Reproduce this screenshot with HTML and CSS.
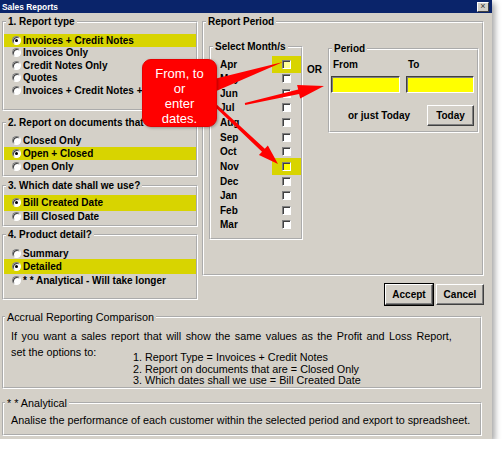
FILE: index.html
```html
<!DOCTYPE html>
<html>
<head>
<meta charset="utf-8">
<title>Sales Reports</title>
<link rel="stylesheet" href="styles.css">
</head>
<body>
<div class="window">
  <div class="titlebar">
    <span class="title">Sales Reports</span>
    <span class="close">×</span>
  </div>
  <div class="content">
    <div class="top">
      <div class="left">
        <fieldset class="group g1">
          <legend>1. Report type</legend>
          <div class="rows r1">
            <div class="opt hl"><span class="radio on"></span>Invoices + Credit Notes</div>
            <div class="opt"><span class="radio"></span>Invoices Only</div>
            <div class="opt"><span class="radio"></span>Credit Notes Only</div>
            <div class="opt"><span class="radio"></span>Quotes</div>
            <div class="opt"><span class="radio"></span>Invoices + Credit Notes + Quotes</div>
          </div>
        </fieldset>
        <fieldset class="group g2">
          <legend>2. Report on documents that are</legend>
          <div class="rows r2">
            <div class="opt"><span class="radio"></span>Closed Only</div>
            <div class="opt hl"><span class="radio on"></span>Open + Closed</div>
            <div class="opt"><span class="radio"></span>Open Only</div>
          </div>
        </fieldset>
        <fieldset class="group g3">
          <legend>3. Which date shall we use?</legend>
          <div class="rows r3">
            <div class="opt hl"><span class="radio on"></span>Bill Created Date</div>
            <div class="opt"><span class="radio"></span>Bill Closed Date</div>
          </div>
        </fieldset>
        <fieldset class="group g4">
          <legend>4. Product detail?</legend>
          <div class="rows r4">
            <div class="opt"><span class="radio"></span>Summary</div>
            <div class="opt hl"><span class="radio on"></span>Detailed</div>
            <div class="opt"><span class="radio"></span>* * Analytical - Will take longer</div>
          </div>
        </fieldset>
      </div>
      <div class="right">
        <fieldset class="group period-group">
          <legend>Report Period</legend>
          <div class="period-inner">
            <fieldset class="group months">
              <legend>Select Month/s</legend>
              <div class="month-rows">
                <div class="month"><span class="mname">Apr</span><span class="cbcell hlcell"><span class="checkbox yel"></span></span></div>
                <div class="month"><span class="mname">May</span><span class="cbcell"><span class="checkbox"></span></span></div>
                <div class="month"><span class="mname">Jun</span><span class="cbcell"><span class="checkbox"></span></span></div>
                <div class="month"><span class="mname">Jul</span><span class="cbcell"><span class="checkbox"></span></span></div>
                <div class="month"><span class="mname">Aug</span><span class="cbcell"><span class="checkbox"></span></span></div>
                <div class="month"><span class="mname">Sep</span><span class="cbcell"><span class="checkbox"></span></span></div>
                <div class="month"><span class="mname">Oct</span><span class="cbcell"><span class="checkbox"></span></span></div>
                <div class="month"><span class="mname">Nov</span><span class="cbcell hlcell"><span class="checkbox yel2"></span></span></div>
                <div class="month"><span class="mname">Dec</span><span class="cbcell"><span class="checkbox"></span></span></div>
                <div class="month"><span class="mname">Jan</span><span class="cbcell"><span class="checkbox"></span></span></div>
                <div class="month"><span class="mname">Feb</span><span class="cbcell"><span class="checkbox"></span></span></div>
                <div class="month"><span class="mname">Mar</span><span class="cbcell"><span class="checkbox"></span></span></div>
              </div>
            </fieldset>
            <div class="or">OR</div>
            <fieldset class="group period">
              <legend>Period</legend>
              <div class="period-body">
                <div class="dates">
                  <div class="datecol"><span class="dlabel">From</span><span class="input"></span></div>
                  <div class="datecol"><span class="dlabel">To</span><span class="input"></span></div>
                </div>
                <div class="today-row">
                  <span>or just Today</span>
                  <span class="btn today">Today</span>
                </div>
              </div>
            </fieldset>
          </div>
        </fieldset>
        <div class="buttons">
          <span class="default"><span class="btn">Accept</span></span>
          <span class="btn cancel">Cancel</span>
        </div>
      </div>
    </div>
    <fieldset class="group accrual">
      <legend>Accrual Reporting Comparison</legend>
      <div class="accrual-body">
        <div class="line1">If you want a sales report that will show the same values as the Profit and Loss Report,</div>
        <div class="setrow">
          <div class="setlabel">set the options to:</div>
          <div class="setlist">
            <div>1. Report Type = Invoices + Credit Notes</div>
            <div>2. Report on documents that are = Closed Only</div>
            <div>3. Which dates shall we use = Bill Created Date</div>
          </div>
        </div>
      </div>
    </fieldset>
    <fieldset class="group analytical">
      <legend>* * Analytical</legend>
      <div class="analytical-body">Analise the performance of each customer within the selected period and export to spreadsheet.</div>
    </fieldset>
  </div>

  <svg class="arrows" width="492" height="439" viewBox="0 0 492 439">
    <polygon points="214,79 283,62 214,92" fill="#ff0000"/>
    <polygon points="244.8,103 298.2,89.6 297.1,84.95 324,86 300.2,98.6 299.1,93.9 245.2,105" fill="#ff0000"/>
    <polygon points="215,102.9 264.8,148.8 267.85,145.55 278,164 258.95,155.05 262,151.8 213,105.1" fill="#ff0000"/>
  </svg>
  <div class="callout">From, to<br>or<br>enter<br>dates.</div>
</div>
</body>
</html>
```

FILE: styles.css
```css
* { box-sizing: border-box; }

body {
  margin: 0;
  background: #ffffff;
  font-family: "Liberation Sans", Arial, sans-serif;
  font-size: 10px;
  font-weight: bold;
  color: #000;
}

.window {
  position: relative;
  width: 492px;
  height: 439px;
  background: #d4d0c8;
  box-shadow: 3px 3px 6px rgba(0, 0, 0, 0.35);
}

.titlebar {
  height: 13px;
  background: #0a246a;
  display: flex;
  align-items: center;
  justify-content: space-between;
  padding: 0 3px 0 2px;
}

.title {
  color: #fff;
  font-size: 8.4px;
  font-weight: bold;
}

.close {
  width: 12px;
  height: 10px;
  background: #d4d0c8;
  border: 1px solid;
  border-color: #fff #404040 #404040 #fff;
  font-size: 9px;
  line-height: 7px;
  text-align: center;
  color: #333;
  font-weight: normal;
}

.content {
  padding: 3px 0 0 2px;
}

.top {
  display: flex;
  align-items: flex-start;
}

.left {
  width: 196px;
  display: flex;
  flex-direction: column;
}

.right {
  width: 282px;
  margin-left: 4px;
  display: flex;
  flex-direction: column;
}

.group {
  margin: 0;
  padding: 0;
  border: 2px groove #ffffff;
  min-width: 0;
}

.group > legend {
  padding: 0 2px;
  margin-left: 2px;
  line-height: 12px;
}

.g1 { height: 95px; }
.g2 { height: 60px; margin-top: 6px; }
.g3 { height: 47px; margin-top: 3px; }
.g4 { height: 71px; margin-top: 2px; }

.rows { padding-left: 0; }
.r1 { padding-top: 6px; }
.r2 { padding-top: 4.5px; }
.r3 { padding-top: 4px; }
.r4 { padding-top: 5.25px; }

.opt {
  display: flex;
  align-items: center;
  padding-left: 8px;
  white-space: nowrap;
  overflow: hidden;
  height: 13px;
}
.r1 .opt { height: 12.5px; }
.r3 .opt, .r4 .opt { height: 13.5px; }

.opt.hl { background: #d8d400; }
.r3 .opt.hl, .r4 .opt.hl { height: 15.5px; margin: -1px 0; }

.radio {
  position: relative;
  flex: none;
  width: 9px;
  height: 9px;
  margin-right: 2px;
  border-radius: 50%;
  background: #fff;
  border: 1px solid;
  border-color: #808080 #fff #fff #808080;
  box-shadow: inset 1px 1px 0 #404040;
}
.radio.on::after {
  content: "";
  position: absolute;
  left: 2px;
  top: 2px;
  width: 3px;
  height: 3px;
  border-radius: 50%;
  background: #000;
}

/* Report period */
.period-group { height: 260px; }

.period-inner {
  display: flex;
  align-items: flex-start;
  padding: 13px 0 0 5px;
}

.months {
  width: 94px;
  height: 199px;
}

.month-rows { padding-top: 3.7px; }

.month {
  display: flex;
  align-items: center;
  height: 14.64px;
  padding-left: 9px;
}

.mname { flex: 1; }

.cbcell {
  width: 29px;
  height: 17px;
  flex: none;
  display: flex;
  align-items: center;
  justify-content: center;
  margin: -1.2px 0;
}
.hlcell { background: #d8d400; }

.checkbox {
  width: 9px;
  height: 9px;
  background: #fff;
  border: 1px solid;
  border-color: #808080 #fff #fff #808080;
  box-shadow: inset 1px 1px 0 #404040;
}
.checkbox.yel { background: #ffff99; }
.checkbox.yel2 { background: #ffff00; }

.or {
  width: 25px;
  margin-top: 23px;
  padding-left: 4px;
  line-height: 12px;
}

.period {
  width: 151px;
  height: 90px;
  margin-top: 2px;
}

.period-body { padding: 4px 3px 0 1px; }

.dates {
  display: flex;
  gap: 6px;
}

.datecol {
  display: flex;
  flex-direction: column;
}
.datecol:first-child { width: 70px; }
.datecol:last-child { width: 69px; }

.dlabel {
  line-height: 12px;
  padding-left: 2px;
}

.input {
  margin-top: 5px;
  height: 17px;
  background: #ffff00;
  border: 1px solid;
  border-color: #404040 #fff #fff #404040;
  box-shadow: inset 1px 1px 0 #808080;
}

.today-row {
  display: flex;
  align-items: center;
  margin-top: 12px;
  padding-left: 17px;
}

.btn {
  display: flex;
  align-items: center;
  justify-content: center;
  width: 48px;
  height: 21px;
  background: #d4d0c8;
  border: 1px solid;
  border-color: #fff #404040 #404040 #fff;
  box-shadow: inset -1px -1px 0 #808080;
}

.today {
  width: 47px;
  margin-left: auto;
}

.buttons {
  display: flex;
  align-items: center;
  justify-content: flex-end;
  margin-top: 7px;
}

.default {
  display: block;
  border: 1px solid #000;
}

.cancel { margin-left: 2px; }

/* bottom */
.accrual {
  width: 480px;
  height: 78px;
  margin-top: 5px;
  font-weight: normal;
  font-size: 10.8px;
}

.accrual > legend, .analytical > legend { margin-left: 1px; }

.accrual-body {
  padding: 6.5px 0 0 7px;
}

.line1 { line-height: 13px; white-space: nowrap; word-spacing: 1.5px; }

.setrow {
  display: flex;
  margin-top: 3.5px;
}

.setlabel {
  width: 122px;
  flex: none;
  line-height: 12px;
}

.setlist {
  margin-top: 6px;
  line-height: 11.5px;
  white-space: nowrap;
}

.analytical {
  width: 480px;
  height: 39px;
  margin-top: 8px;
  font-weight: normal;
  font-size: 10.8px;
}

.analytical-body {
  padding: 4.5px 0 0 7px;
  line-height: 13px;
  white-space: nowrap;
}

/* overlay */
.arrows {
  position: absolute;
  left: 0;
  top: 0;
  pointer-events: none;
}

.callout {
  position: absolute;
  left: 142px;
  top: 59px;
  width: 75px;
  height: 68px;
  padding-top: 6px;
  background: #ff0000;
  border: 1px solid #e80000;
  border-radius: 9px;
  color: #fff;
  font-weight: normal;
  font-size: 13px;
  line-height: 15px;
  text-align: center;
  box-shadow: 1px 1px 3px rgba(0, 0, 0, 0.3);
}
```
